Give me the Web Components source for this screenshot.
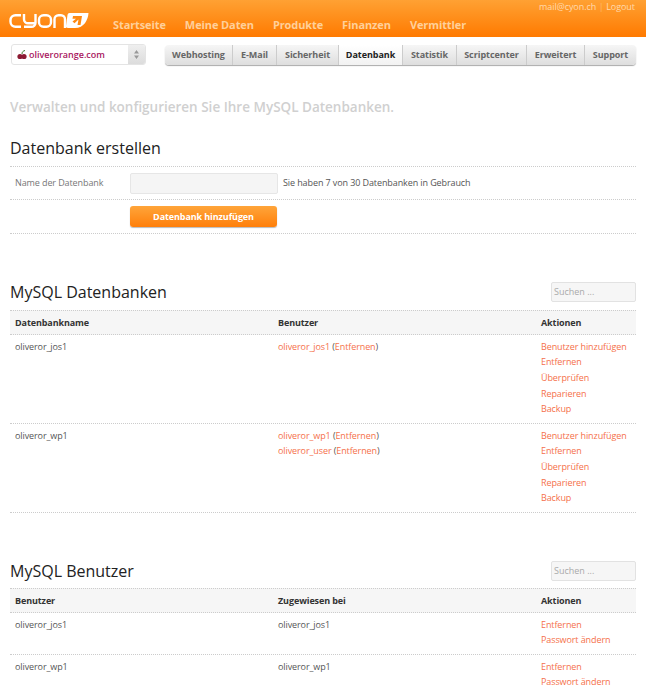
<!DOCTYPE html>
<html lang="de">
<head>
<meta charset="utf-8">
<title>cyon</title>
<style>
  html, body { margin: 0; padding: 0; background: #fff; }
  body { font: 9px/15.6px "Open Sans", "Noto Sans", sans-serif; color: #444; overflow: hidden; height: 692px; }
</style>
</head>
<body>
<cy-topbar></cy-topbar>
<cy-subbar></cy-subbar>
<cy-main>
  <cy-lead>Verwalten und konfigurieren Sie Ihre MySQL Datenbanken.</cy-lead>
  <cy-create></cy-create>
  <cy-section title="MySQL Datenbanken" style="margin-top:45px">
    <cy-table cols="Datenbankname|Benutzer|Aktionen" rows='[
      {"h":89,"a":["oliveror_jos1"],"b":[["oliveror_jos1"]],"c":["Benutzer hinzufügen","Entfernen","Überprüfen","Reparieren","Backup"]},
      {"h":89,"a":["oliveror_wp1"],"b":[["oliveror_wp1"],["oliveror_user"]],"c":["Benutzer hinzufügen","Entfernen","Überprüfen","Reparieren","Backup"]}
    ]'></cy-table>
  </cy-section>
  <cy-section title="MySQL Benutzer" style="margin-top:45px; --head-gap:4px">
    <cy-table cols="Benutzer|Zugewiesen bei|Aktionen" rows='[
      {"h":42,"a":["oliveror_jos1"],"t":"oliveror_jos1","c":["Entfernen","Passwort ändern"]},
      {"h":42,"a":["oliveror_wp1"],"t":"oliveror_wp1","c":["Entfernen","Passwort ändern"]}
    ]'></cy-table>
  </cy-section>
</cy-main>

<script>
const FONT = '"Open Sans", "Noto Sans", sans-serif';

class CyTopbar extends HTMLElement {
  constructor() {
    super();
    this.attachShadow({ mode: "open" });
    const items = ["Startseite", "Meine Daten", "Produkte", "Finanzen", "Vermittler"];
    this.shadowRoot.innerHTML = `
      <style>
        :host { display: flex; height: 37px; background: linear-gradient(#ffa133, #ff7a00); font-family: ${FONT}; position: relative; }
        svg { margin: 12px 0 0 9px; flex: none; }
        nav { display: flex; gap: 19px; margin: 17px 0 0 24px; }
        nav a { font-size: 11px; line-height: 16px; font-weight: 700; letter-spacing: -.1px; color: #ffd09a; white-space: nowrap; }
        .user { position: absolute; right: 11px; top: 0; font-size: 9px; line-height: 13px; letter-spacing: -.05px; color: #ffd9ac; }
        .user i { font-style: normal; opacity: .5; margin: 0 2.500px; }
      </style>
      <svg width="80" height="19" viewBox="0 0 80 19" fill="none" stroke="#fff" stroke-width="2.400">
        <path d="M12 3.200H6.500a5 5 0 0 0-5 5v1.600a5 5 0 0 0 5 5H12"/>
        <path d="M15 2v5.200a4 4 0 0 0 4 4h7.500M26.500 2v8.800a4 4 0 0 1-4 4H15"/>
        <rect x="30" y="3.200" width="12" height="11.600" rx="4.500"/>
        <path d="M45.500 16V7.200a4 4 0 0 1 4-4h2.500a4 4 0 0 1 4 4V16"/>
        <path fill="#fff" stroke="none" d="M60.500 1H79.500C79 8 75 16 66 16H59c-1.500 0-2.200-.8-2-2l1.500-11c.2-1.300 1-2 2-2z"/>
        <path fill="#ff8a12" stroke="none" d="M64 4h9l-1.500 9h-3l1-5.500-4 3.800-2-1.800 3.500-2.800H63.500z"/>
      </svg>
      <nav>${items.map(i => `<a>${i}</a>`).join("")}</nav>
      <div class="user">mail@cyon.ch<i>|</i>Logout</div>
    `;
  }
}

class CySubbar extends HTMLElement {
  constructor() {
    super();
    this.attachShadow({ mode: "open" });
    const tabs = [["Webhosting", 67], ["E-Mail", 44], ["Sicherheit", 62], ["Datenbank", 64], ["Statistik", 54], ["Scriptcenter", 70], ["Erweitert", 58], ["Support", 52]];
    this.shadowRoot.innerHTML = `
      <style>
        :host { display: flex; align-items: flex-start; padding: 7px 10px 0 11px; font-family: ${FONT}; }
        .select { flex: none; display: flex; width: 135px; height: 21px; box-sizing: border-box; border: 1px solid #e4e4e4; border-radius: 3px; background: #fff; overflow: hidden; }
        .name { flex: 1; display: flex; align-items: center; gap: 1px; padding-left: 4px; font-size: 9px; font-weight: 600; color: #a8175e; }
        .arrows { width: 17px; background: linear-gradient(#efefef, #dcdcdc); display: flex; align-items: center; justify-content: center; }
        .tabs { flex: none; display: flex; margin: 1px 0 0 19px; height: 20px; border-radius: 4px; box-shadow: 0 1px 1px #aaa; background: linear-gradient(#f6f6f6, #dedede); overflow: hidden; }
        .tabs a { display: block; box-sizing: border-box; text-align: center; font-size: 9px; letter-spacing: -.05px; font-weight: 700; line-height: 20px; color: #666; border-left: 1px solid #ccc; white-space: nowrap; }
        .tabs a:first-child { border-left: 0; }
        .tabs a.on { background: linear-gradient(#fff, #f2f2f2); color: #222; }
      </style>
      <div class="select">
        <div class="name">
          <svg width="12" height="12" viewBox="0 0 12 12"><path d="M6 5C6 3 7 2 9 1.500" stroke="#3c7a2a" fill="none"/><circle cx="4" cy="7.500" r="2.600" fill="#8c1b33"/><circle cx="8" cy="7.500" r="2.600" fill="#8c1b33"/></svg>
          <span>oliverorange.com</span>
        </div>
        <div class="arrows"><svg width="7" height="11" viewBox="0 0 7 11" fill="#999"><path d="M3.500 1 6 4.500H1zM3.500 10 1 6.500h5z"/></svg></div>
      </div>
      <div class="tabs">${tabs.map(([t, w]) => `<a class="${t === "Datenbank" ? "on" : ""}" style="width:${w}px">${t}</a>`).join("")}</div>
    `;
  }
}

class CyMain extends HTMLElement {
  constructor() {
    super();
    this.attachShadow({ mode: "open" });
    this.shadowRoot.innerHTML = `
      <style>
        :host { display: block; padding: 0 10px; font-family: ${FONT}; }
      </style>
      <slot></slot>
    `;
  }
}

class CyLead extends HTMLElement {
  constructor() {
    super();
    this.attachShadow({ mode: "open" });
    this.shadowRoot.innerHTML = `
      <style>
        :host { display: block; margin-top: 32px; font-size: 13.500px; line-height: 20px; font-weight: 600; color: #d0d0d0; }
      </style>
      <slot></slot>
    `;
  }
}

class CyCreate extends HTMLElement {
  constructor() {
    super();
    this.attachShadow({ mode: "open" });
    this.shadowRoot.innerHTML = `
      <style>
        :host { display: block; margin-top: 19px; letter-spacing: -.1px; }
        h2 { margin: 0; font-size: 16px; line-height: 24px; font-weight: 400; color: #222; letter-spacing: 0; }
        .row { display: flex; align-items: center; border-top: 1px dotted #ccc; padding-left: 5px; }
        .r1 { margin-top: 6px; height: 32px; }
        .r2 { height: 33px; padding-left: 120px; border-bottom: 1px dotted #ccc; }
        label { width: 115px; color: #777; font-size: 9px; }
        .field { width: 146px; height: 19px; border: 1px solid #e6e6e6; border-radius: 2px; background: #f5f5f5; }
        .hint { margin-left: 5px; font-size: 9px; color: #555; }
        button { width: 147px; height: 21px; border: 0; border-radius: 3px; padding: 0; background: linear-gradient(#ffa53a, #ff7f0a); color: #fff; font: 700 9px ${FONT}; letter-spacing: -.1px; box-shadow: 0 1px 1px #bbb; }
      </style>
      <h2>Datenbank erstellen</h2>
      <div class="row r1"><label>Name der Datenbank</label><div class="field"></div><span class="hint">Sie haben 7 von 30 Datenbanken in Gebrauch</span></div>
      <div class="row r2"><button>Datenbank hinzufügen</button></div>
    `;
  }
}

class CySection extends HTMLElement {
  constructor() {
    super();
    this.attachShadow({ mode: "open" });
    this.shadowRoot.innerHTML = `
      <style>
        :host { display: block; }
        header { display: flex; justify-content: space-between; align-items: center; height: 26px; margin-bottom: var(--head-gap, 5px); }
        h2 { margin: 0; font-size: 16px; line-height: 24px; font-weight: 400; color: #222; }
        .search { width: 83px; height: 18px; border: 1px solid #e2e2e2; border-radius: 2px; background: #f6f6f6; font-size: 9px; line-height: 18px; color: #aaa; text-indent: 2px; }
      </style>
      <header><h2></h2><div class="search">Suchen ...</div></header>
      <slot></slot>
    `;
    this.shadowRoot.querySelector("h2").textContent = this.getAttribute("title");
  }
}

class CyTable extends HTMLElement {
  constructor() {
    super();
    this.attachShadow({ mode: "open" });
  }

  connectedCallback() {
    const cols = this.getAttribute("cols").split("|");
    const rows = JSON.parse(this.getAttribute("rows"));
    const line = (t) => `<div>${t}</div>`;
    const user = (u) => `<div><a>${u[0]}</a> (<a>Entfernen</a>)</div>`;
    this.shadowRoot.innerHTML = `
      <style>
        :host { display: block; font-size: 9px; letter-spacing: -.1px; line-height: 15.700px; color: #555; }
        .row { display: grid; grid-template-columns: 263px 263px 1fr; padding-left: 5px; border-bottom: 1px dotted #ccc; box-sizing: border-box; }
        .head { height: 25px; background: #f6f6f6; border-top: 1px dotted #ccc; font-weight: 700; color: #333; align-items: center; }
        .cell { padding-top: 2.500px; }
        .body { padding-top: 1px; }
        a, .act { color: #f5704a; }
      </style>
      <div class="row head">${cols.map(c => `<div>${c}</div>`).join("")}</div>
      ${rows.map(r => `
        <div class="row body" style="height:${r.h}px">
          <div class="cell">${r.a.map(line).join("")}</div>
          <div class="cell">${r.b ? r.b.map(user).join("") : line(r.t)}</div>
          <div class="cell act">${r.c.map(line).join("")}</div>
        </div>`).join("")}
    `;
  }
}

customElements.define("cy-topbar", CyTopbar);
customElements.define("cy-subbar", CySubbar);
customElements.define("cy-main", CyMain);
customElements.define("cy-lead", CyLead);
customElements.define("cy-create", CyCreate);
customElements.define("cy-section", CySection);
customElements.define("cy-table", CyTable);
</script>
</body>
</html>
